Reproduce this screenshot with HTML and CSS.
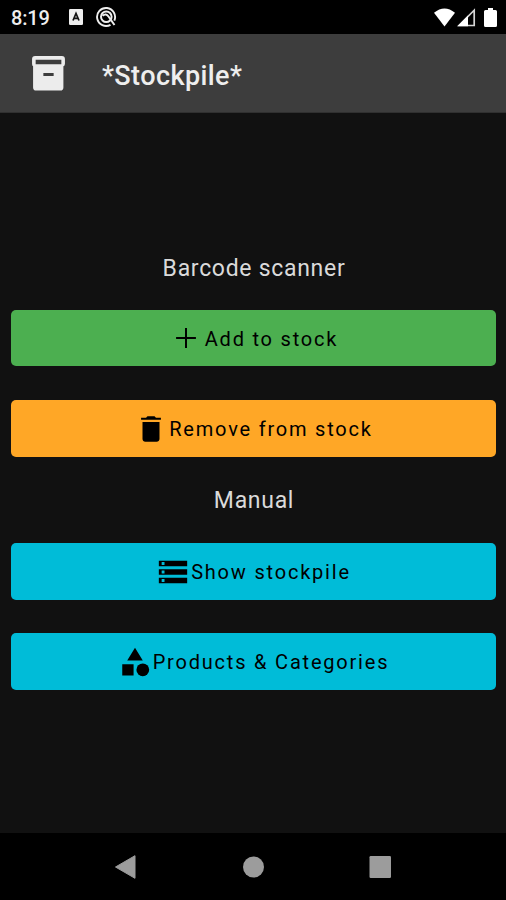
FILE: index.html
```html
<!DOCTYPE html>
<html lang="en">
<head>
<meta charset="utf-8">
<title>Stockpile</title>
<link rel="stylesheet" href="styles.css">
</head>
<body>
<div class="screen">
  <div class="status">
    <span class="clock">8:19</span>
    <svg class="status-app" width="14" height="16" viewBox="0 0 14 16"><rect width="14" height="16" rx="1.3" fill="#eee"/><path d="M4 11.5 7 4.5 10 11.5M5.2 9.3H8.8" fill="none" stroke="#111" stroke-width="1.7"/></svg>
    <svg class="status-ring" width="21" height="20" viewBox="0 0 21 20" fill="none" stroke="#eee"><path d="M14.500 17.800A9 9 0 1 1 18.300 13.600" stroke-width="1.900"/><circle cx="10.300" cy="9.700" r="5.300" stroke-width="2"/><path d="M6.500 8.800Q10 5.800 12.500 9.500L18.500 18" stroke-width="2"/></svg>
    <div class="signals">
      <svg width="21" height="19" viewBox="0 0 21 19"><path d="M0 4.8Q10.5-4 21 4.8L10.5 18.5Z" fill="#fff"/></svg>
      <svg width="19" height="19" viewBox="0 0 19 19"><path d="M17.200 2.200V17.500H2Z" fill="none" stroke="#d5d5d5" stroke-width="1.700"/><path d="M.5 18.300 11 7.500V18.300Z" fill="#fff"/></svg>
      <svg class="battery" width="13" height="19" viewBox="0 0 13 19"><path d="M4 0h5v2h2.5Q13 2 13 3.5v14Q13 19 11.5 19h-10Q0 19 0 17.500V3.500Q0 2 1.500 2H4Z" fill="#fff"/></svg>
    </div>
  </div>
  <header class="appbar">
    <svg class="logo" width="35" height="37" viewBox="0 0 34 36"><path fill-rule="evenodd" fill="#ececec" d="M4 1H30Q33 1 33 4V8.500Q33 10.500 31.500 11V31.500Q31.500 34.500 28.500 34.500H5Q2 34.500 2 31.500V11Q1 10.500 1 8.500V4Q1 1 4 1ZM4.500 4.500V9H29.500V4.500ZM12 17.500V20.500H22V17.500Z"/></svg>
    <h1 class="title">*Stockpile*</h1>
  </header>
  <main class="content">
    <h2 class="heading">Barcode scanner</h2>
    <button class="action add"><svg class="icon" viewBox="0 0 24 24"><path d="M19 12.700h-6.300V19h-1.400v-6.300H5v-1.400h6.300V5h1.400v6.300H19z"/></svg><span>Add to stock</span></button>
    <button class="action remove"><svg class="icon" viewBox="0 0 24 24"><path d="M6 19c0 1.100.9 2 2 2h8c1.100 0 2-.9 2-2V7H6v12zM19 4h-3.500l-1-1h-5l-1 1H5v1.500h14V4z"/></svg><span>Remove from stock</span></button>
    <h2 class="heading manual">Manual</h2>
    <button class="action show"><svg class="icon" viewBox="0 0 24 24"><path d="M2 20h20v-4H2v4zm2-3h2v2H4v-2zM2 4v4h20V4H2zm4 3H4V5h2v2zm-4 7h20v-4H2v4zm2-3h2v2H4v-2z"/></svg><span>Show stockpile</span></button>
    <button class="action products"><svg class="icon" viewBox="0 0 24 24"><path d="m12 2-5.500 9h11zM3 13.500h8v8H3z"/><circle cx="17.500" cy="17.500" r="4.500"/></svg><span>Products &amp; Categories</span></button>
  </main>
  <nav class="navbar">
    <svg width="22" height="24" viewBox="0 0 22 24"><path d="M.5 12 20 .7V23.300Z" fill="#9c9c9c" stroke="#9c9c9c" stroke-linejoin="round"/></svg>
    <svg width="22" height="22" viewBox="0 0 22 22"><circle cx="11.500" cy="11" r="10.500" fill="#9c9c9c"/></svg>
    <svg width="22" height="22" viewBox="0 0 22 22"><rect x=".5" width="21.500" height="22" rx="1.200" fill="#9c9c9c"/></svg>
  </nav>
</div>
</body>
</html>
```
FILE: styles.css
```css
* { box-sizing: border-box; }
body { margin: 0; background: #111; font-family: Roboto, "Liberation Sans", sans-serif; }
.screen { width: 506px; height: 900px; display: flex; flex-direction: column; background: #111; overflow: hidden; }
.status { height: 34px; flex: none; display: flex; align-items: center; background: #000; padding: 0 9px 0 11px; }
.clock { width: 58px; color: #eee; font-size: 20px; font-weight: 500; line-height: 34px; padding-top: 2px; letter-spacing: -0.2px; }
.status-app { margin-right: 13px; }
.signals { margin-left: auto; display: flex; gap: 2px; }
.battery { margin-left: 6px; }
.appbar { height: 79px; flex: none; display: flex; align-items: center; background: #3d3d3d; padding-left: 31px; border-bottom: 1px solid #303030; }
.logo { margin-right: 36px; }
.title { margin: 0; padding-top: 5px; color: #eee; font-size: 27px; font-weight: 500; line-height: 36px; letter-spacing: 0.4px; }
.content { flex: 1; display: flex; flex-direction: column; padding: 141px 10px 0 11px; }
.heading { margin: 0 0 26px; height: 30px; line-height: 30px; text-align: center; color: #dadada; font-size: 23px; font-weight: 400; letter-spacing: 0.7px; padding-left: 1px; }
.manual { margin: 29px 0 27px; }
.action { height: 57px; flex: none; display: flex; align-items: center; justify-content: center; border: 0; border-radius: 5px; padding: 0; font-family: inherit; font-size: 20px; line-height: 30px; letter-spacing: 1.8px; color: #000; }
.action span { padding: 1px 0 0 1px; }
.icon { width: 34px; height: 34px; flex: none; }
.add { height: 56px; background: #4caf50; margin-bottom: 34px; }
.add span { padding: 2px 0 0 2px; }
.remove { background: #ffa726; }
.show { background: #00bcd8; margin-bottom: 33px; }
.products { background: #00bcd8; }
.navbar { height: 67px; flex: none; display: flex; align-items: center; justify-content: space-between; background: #000; padding: 0 115px; }
```
